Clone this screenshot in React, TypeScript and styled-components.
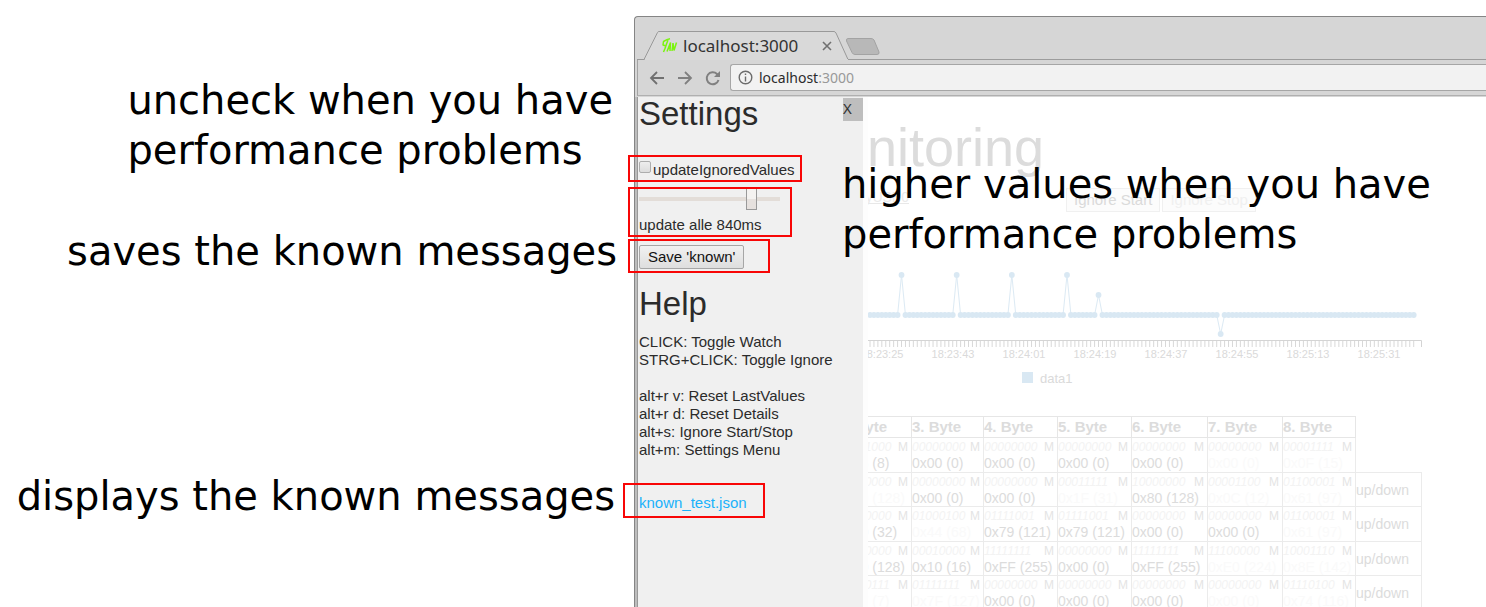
import React from "react";
import styled, { createGlobalStyle } from "styled-components";

const sans = '"Liberation Sans", Arial, sans-serif';
const ui = '"Noto Sans", sans-serif';

const Global = createGlobalStyle`
  *, *::before, *::after { box-sizing: border-box; }
  body { margin: 0; background: #fff; overflow: hidden; }
  h1, h2, p { margin: 0; font-weight: 400; }
`;

const Stage = styled.div`
  position: relative;
  display: grid;
  grid-template-columns: 634px minmax(0, 1fr);
  height: 100vh;
  overflow: hidden;
`;

const Notes = styled.div`
  display: flex;
  flex-direction: column;
  align-items: flex-end;
  padding: 75px 17px 0 0;
`;

const Note = styled.p<{ $top?: number; $right?: number }>`
  margin-top: ${(p) => p.$top ?? 0}px;
  margin-right: ${(p) => p.$right ?? 0}px;
  font: 40px/50px "DejaVu Sans", sans-serif;
  color: #000;
  white-space: nowrap;
`;

const FloatingNote = styled(Note)`
  position: absolute;
  left: 842px;
  top: 159px;
  margin: 0;
`;

const Marker = styled.div<{ $x: number; $y: number; $w: number; $h: number }>`
  position: absolute;
  left: ${(p) => p.$x}px;
  top: ${(p) => p.$y}px;
  width: ${(p) => p.$w}px;
  height: ${(p) => p.$h}px;
  border: 2px solid #f80606;
  pointer-events: none;
`;

const Browser = styled.div`
  display: flex;
  flex-direction: column;
  min-height: 0;
  margin-top: 16px;
  border: solid #858585;
  border-width: 1px 0 0 1px;
  border-top-left-radius: 4px;
  background: #d6d6d6;
`;

const TabStrip = styled.div`
  display: flex;
  align-items: flex-end;
  height: 43px;
  margin-left: 2px;
  border-bottom: 1px solid #9c9c9c;
`;

const Tab = styled.div`
  position: relative;
  display: flex;
  align-items: center;
  width: 212px;
  height: 29px;
  margin-bottom: -1px;
  padding: 0 17px 0 25px;
`;

const TabShape = styled.svg`
  position: absolute;
  inset: 0;
`;

const Favicon = styled.svg`
  position: relative;
  flex: none;
  margin-right: 5px;
`;

const TabTitle = styled.span`
  position: relative;
  flex: 1;
  font: 17px/24px ${ui};
  color: #333;
`;

const IconButton = styled.button`
  position: relative;
  display: flex;
  padding: 0;
  border: 0;
  background: none;
  color: #707070;
`;

const NewTab = styled(IconButton)`
  margin: 0 0 4px -4px;
`;

const Toolbar = styled.div`
  display: flex;
  align-items: center;
  gap: 12px;
  height: 36px;
  margin-left: 2px;
  padding-left: 11px;
  border-left: 1px solid #a3a3a3;
  border-bottom: 1px solid #b0b0b0;
`;

const Address = styled.div`
  display: flex;
  flex: 1;
  align-items: center;
  gap: 6px;
  height: 27px;
  margin-left: -3px;
  padding-left: 7px;
  border: solid #a6a6a6;
  border-width: 1px 0 1px 1px;
  border-radius: 3px 0 0 3px;
  background: #f2f2f2;
`;

const AddressText = styled.span`
  font: 14px/20px ${ui};
  color: #999;
  b { font-weight: 400; color: #2b2b2b; }
`;

const Viewport = styled.div`
  display: flex;
  flex: 1;
  min-height: 0;
  border-left: 2px solid #bdbdbd;
  margin-top: 1px;
  overflow: hidden;
  background: #fdfdfd;
`;

const Panel = styled.aside`
  flex: none;
  width: 226px;
  padding-left: 1px;
  border-left: 1px solid #999;
  background: #f0f0f0;
  font: 15px/18px ${sans};
  color: #2b2b2b;
`;

const PanelHead = styled.div`
  display: flex;
  justify-content: space-between;
`;

const Heading = styled.h2`
  font: 33px/34px ${sans};
  color: #2b2b2b;
`;

const Close = styled.button`
  display: flex;
  width: 20px;
  height: 23px;
  margin-top: 1px;
  padding: 0;
  border: 0;
  background: #bebebe;
  font: 15px/20px ${ui};
  color: #333;
`;

const CheckRow = styled.label`
  display: flex;
  margin-top: 30px;
  gap: 2px;
`;

const Check = styled.input`
  appearance: none;
  width: 12px;
  height: 12px;
  margin: 0;
  border: 1px solid #adadad;
  border-radius: 2px;
  background: linear-gradient(#eee, #ddd);
`;

const RangeRow = styled.label`
  display: flex;
  flex-direction: column;
  margin-top: 9px;
  gap: 6px;
`;

const Range = styled.input`
  appearance: none;
  width: 141px;
  height: 22px;
  margin: 0;
  background: none;
  &::-webkit-slider-runnable-track {
    height: 4px;
    background: #e3ddd8;
  }
  &::-webkit-slider-thumb {
    appearance: none;
    width: 11px;
    height: 22px;
    margin-top: -9px;
    border: 1px solid #999;
    background: linear-gradient(#f4f2f0 50%, #e6e1de 50%);
  }
`;

const Save = styled.button`
  height: 24px;
  margin-top: 11px;
  padding: 0 8px;
  border: 1px solid #a6a6a6;
  border-radius: 2px;
  background: linear-gradient(#f1f1f1, #dedede);
  font: 15px/20px ${sans};
  color: #111;
`;

const Help = styled.section`
  margin-top: 18px;
`;

const HelpLines = styled.p`
  margin: 12px 0 35px;
  white-space: pre-line;
`;

const FileLink = styled.a`
  color: #1ab2fb;
  text-decoration: none;
`;

const Page = styled.main`
  flex: 1;
  min-width: 0;
  margin-left: 5px;
  overflow: hidden;
  background: #fff;
  font: 14px/18px ${sans};
  color: #dcdcdc;
`;

const Title = styled.h1`
  margin: 22px 0 0 -76px;
  font: 54px/56px ${sans};
`;

const Controls = styled.div`
  display: flex;
  align-items: flex-start;
  height: 30px;
  margin: 13px 0 0 -30px;
`;

const Port = styled.a`
  width: 71px;
  height: 16px;
  margin-right: 157px;
  border-bottom: 1px solid #e8e8e8;
  color: #eaeaea;
  line-height: 18px;
  text-align: right;
  text-decoration: none;
`;

const Ghost = styled.button<{ $dim?: boolean }>`
  height: 24px;
  margin-right: 2px;
  padding: 0 7px;
  border: 1px solid #f0f0f0;
  background: #fcfcfc;
  font: 15px/22px ${sans};
  color: ${(p) => (p.$dim ? "#f0f0f0" : "#dadada")};
`;

const Chart = styled.svg`
  display: block;
  margin-top: 42px;
  font: 11px ${sans};
`;

const Table = styled.table`
  table-layout: fixed;
  width: 584px;
  margin: 28px 0 0 -31px;
  border-collapse: collapse;
`;

const Th = styled.th`
  height: 21px;
  padding: 0;
  border: 1px solid #e6e6e6;
  font: bold 15px/20px ${sans};
  text-align: left;
`;

const Row = styled.tr`
  height: 35px;
  &:nth-child(even) { height: 34px; }
`;

const Td = styled.td`
  padding: 0;
  border: 1px solid #ebebeb;
  white-space: nowrap;
`;

const Bits = styled.div`
  display: flex;
  justify-content: space-between;
  padding-right: 3px;
  font: 12px/17px ${sans};
  color: #e4e4e4;
  i { color: #f3f3f3; }
`;

const Value = styled.div<{ $dim?: boolean }>`
  line-height: 15px;
  color: ${(p) => (p.$dim ? "#fafafa" : "#dcdcdc")};
`;

type Cell = [bits: string, value: string, dim?: boolean];

const rows: Cell[][] = [
  [["00001000", "0x08 (8)"], ["00000000", "0x00 (0)"], ["00000000", "0x00 (0)"], ["00000000", "0x00 (0)"], ["00000000", "0x00 (0)"], ["00000000", "0x00 (0)", true], ["00001111", "0x0F (15)", true]],
  [["10000000", "0x80 (128)", true], ["00000000", "0x00 (0)"], ["00000000", "0x00 (0)"], ["00011111", "0x1F (31)", true], ["10000000", "0x80 (128)"], ["00001100", "0x0C (12)", true], ["01100001", "0x61 (97)", true]],
  [["00100000", "0x20 (32)"], ["01000100", "0x44 (68)", true], ["01111001", "0x79 (121)"], ["01111001", "0x79 (121)"], ["00000000", "0x00 (0)"], ["00000000", "0x00 (0)"], ["01100001", "0x61 (97)", true]],
  [["10000000", "0x80 (128)"], ["00010000", "0x10 (16)"], ["11111111", "0xFF (255)"], ["00000000", "0x00 (0)"], ["11111111", "0xFF (255)"], ["11100000", "0xE0 (224)", true], ["10001110", "0x8E (142)", true]],
  [["00000111", "0x07 (7)", true], ["01111111", "0x7F (127)", true], ["00000000", "0x00 (0)"], ["00000000", "0x00 (0)"], ["00000000", "0x00 (0)"], ["00000000", "0x00 (0)", true], ["01110100", "0x74 (116)", true]],
];

const columns = [74, 72, 74, 74, 76, 75, 73, 66];

const STEP = 3.94;
const BASE = 55;
const peaks: Record<number, number> = { 8: 15, 22: 15, 36: 15, 50: 15, 58: 35, 89: 74 };
const points = Array.from({ length: 139 }, (_, i) => ({ x: 2 + i * STEP, y: peaks[i] ?? BASE }));
const times = ["18:23:25", "18:23:43", "18:24:01", "18:24:19", "18:24:37", "18:24:55", "18:25:13", "18:25:31"];

const TimeChart = () => (
  <Chart width="560" height="128" role="img" aria-label="data1">
    <g fill="#d9e8f3">
      <polyline points={points.map((p) => `${p.x},${p.y}`).join(" ")} fill="none" stroke="#dceaf4" />
      {points.map((p) => (
        <circle key={p.x} cx={p.x} cy={p.y} r="2.9" />
      ))}
      <rect x="154" y="112" width="11" height="11" />
    </g>
    <path d="M0 80.500H553.500V87" fill="none" stroke="#d4d4d4" />
    <path d={points.map((p) => `M${p.x} 81v6`).join("")} stroke="#d8d8d8" />
    <g fill="#dadada">
      {times.map((t, i) => (
        <text key={t} x={14 + i * 71} y="98" textAnchor="middle">{t}</text>
      ))}
      <text x="172" y="123" fontSize="13">data1</text>
    </g>
  </Chart>
);

export default function App() {
  return (
    <>
      <Global />
      <Stage>
        <Notes>
          <Note $right={4}>uncheck when you have<br />performance problems</Note>
          <Note $top={51}>saves the known messages</Note>
          <Note $top={195} $right={2}>displays the known messages</Note>
        </Notes>
        <Browser>
          <TabStrip>
            <Tab>
              <TabShape width="212" height="29" fill="#d9d9d9" stroke="#999">
                <path d="M0 28.500H7L20.500 1.500Q21 .5 22 .5H197Q198 .5 199 2L211 28.500" />
                <path d="M8 29H211" stroke="#d9d9d9" strokeWidth="2" />
              </TabShape>
              <Favicon width="16" height="16" viewBox="0 0 16 16" fill="none" stroke="#7bf40e" strokeWidth="1.500" strokeLinejoin="bevel">
                <path d="M8 .8Q5 1.200 1.500 3.500L1 7 4 8M6 2 4.500 6 3 10.500 1.500 14M5 13.500 8.500 4.500 8 13M6 10.500H8.800M10 13 11 5 12 12.500 14.500 4.500" />
              </Favicon>
              <TabTitle>localhost:3000</TabTitle>
              <IconButton aria-label="Close tab">
                <svg width="10" height="10" stroke="#707070" strokeWidth="1.600"><path d="M1 1 9 9M9 1 1 9" /></svg>
              </IconButton>
            </Tab>
            <NewTab aria-label="New tab">
              <svg width="36" height="17" fill="#b8b8b8" stroke="#a3a3a3">
                <path d="M3 .5H26Q28 .5 29 2L34 14Q34.500 16.500 32 16.500H10Q8 16.500 7 14.500L1.500 3Q1 .5 3 .5Z" />
              </svg>
            </NewTab>
          </TabStrip>
          <Toolbar>
            <IconButton aria-label="Back">
              <svg width="16" height="16" fill="none" stroke="#707070" strokeWidth="1.800"><path d="M15 8H2M8 2 2 8 8 14" /></svg>
            </IconButton>
            <IconButton aria-label="Forward">
              <svg width="16" height="16" fill="none" stroke="#808080" strokeWidth="1.800"><path d="M1 8H14M8 2 14 8 8 14" /></svg>
            </IconButton>
            <IconButton aria-label="Reload">
              <svg width="16" height="16" fill="none" stroke="#808080" strokeWidth="2">
                <path d="M13.500 10A6 6 0 1 1 12 4L13.500 5.500" />
                <path d="M15 1V7H9Z" fill="#808080" stroke="none" />
              </svg>
            </IconButton>
            <Address>
              <svg width="15" height="15" fill="none" stroke="#6c6c6c" strokeWidth="1.400"><circle cx="7.500" cy="7.500" r="6.300" /><path d="M7.500 6.500V11.500M7.500 3.500V5" /></svg>
              <AddressText><b>localhost</b>:3000</AddressText>
            </Address>
          </Toolbar>
          <Viewport>
            <Panel>
              <PanelHead>
                <Heading>Settings</Heading>
                <Close>X</Close>
              </PanelHead>
              <CheckRow><Check type="checkbox" />updateIgnoredValues</CheckRow>
              <RangeRow>
                <Range type="range" min="100" max="1000" defaultValue="840" />
                update alle 840ms
              </RangeRow>
              <Save>Save 'known'</Save>
              <Help>
                <Heading>Help</Heading>
                <HelpLines>{"CLICK: Toggle Watch\nSTRG+CLICK: Toggle Ignore\n\nalt+r v: Reset LastValues\nalt+r d: Reset Details\nalt+s: Ignore Start/Stop\nalt+m: Settings Menu"}</HelpLines>
                <FileLink href="#known">known_test.json</FileLink>
              </Help>
            </Panel>
            <Page>
              <Title>Monitoring</Title>
              <Controls>
                <Port href="#port">ttyUSB0</Port>
                <Ghost>Ignore Start</Ghost>
                <Ghost $dim>Ignore Stop</Ghost>
              </Controls>
              <TimeChart />
              <Table>
                <colgroup>{columns.map((w, i) => <col key={i} style={{ width: w }} />)}</colgroup>
                <thead>
                  <tr>{[2, 3, 4, 5, 6, 7, 8].map((n) => <Th key={n}>{n}. Byte</Th>)}</tr>
                </thead>
                <tbody>
                  {rows.map((row, r) => (
                    <Row key={r}>
                      {row.map(([bits, value, dim], c) => (
                        <Td key={c}>
                          <Bits><i>{bits}</i>M</Bits>
                          <Value $dim={dim}>{value}</Value>
                        </Td>
                      ))}
                      {r > 0 && <Td>up/down</Td>}
                    </Row>
                  ))}
                </tbody>
              </Table>
            </Page>
          </Viewport>
        </Browser>
        <Marker $x={628} $y={155} $w={174} $h={27} />
        <Marker $x={628} $y={187} $w={164} $h={50} />
        <Marker $x={628} $y={239} $w={142} $h={34} />
        <Marker $x={623} $y={483} $w={142} $h={35} />
        <FloatingNote>higher values when you have<br />performance problems</FloatingNote>
      </Stage>
    </>
  );
}
